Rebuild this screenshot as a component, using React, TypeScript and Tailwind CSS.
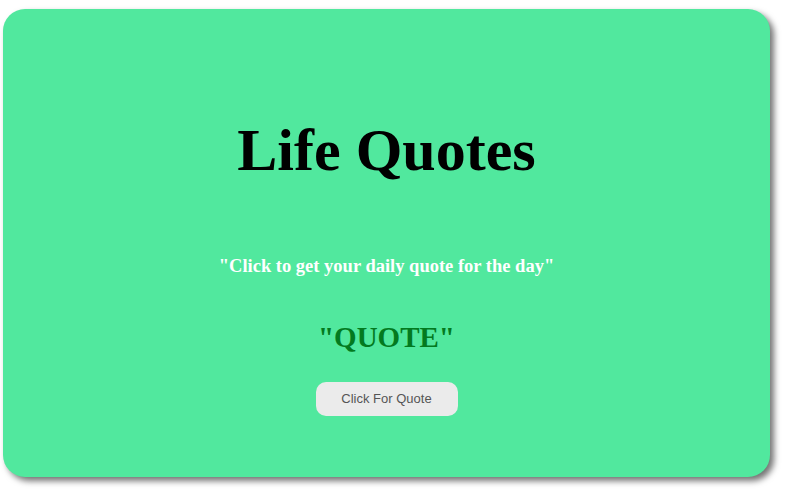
export default function App() {
  return (
    <div className="w-[787px] h-[494px] bg-white pl-[3px] pt-[9px]">
      <div className="w-[767px] h-[468px] rounded-[22px] bg-[#51e89e] shadow-[4px_4px_6px_rgba(0,0,0,0.55)] flex flex-col items-center pt-[111px]">
        <h1 className="font-['Liberation_Serif',serif] font-bold text-[60px] leading-[60px] text-black">
          Life Quotes
        </h1>
        <h3 className="mt-[77px] font-['Liberation_Serif',serif] font-bold text-[18.5px] leading-[18.5px] text-white">
          "Click to get your daily quote for the day"
        </h3>
        <h2 className="mt-[47px] font-['Liberation_Serif',serif] font-bold text-[29px] leading-[29px] text-[#037a1f]">
          "QUOTE"
        </h2>
        <button className="mt-[30px] w-[142px] h-[34px] rounded-[10px] bg-[#ebebeb] font-['Liberation_Sans',Arial,sans-serif] text-[13px] text-[#555555] flex items-center justify-center">
          Click For Quote
        </button>
      </div>
    </div>
  );
}
